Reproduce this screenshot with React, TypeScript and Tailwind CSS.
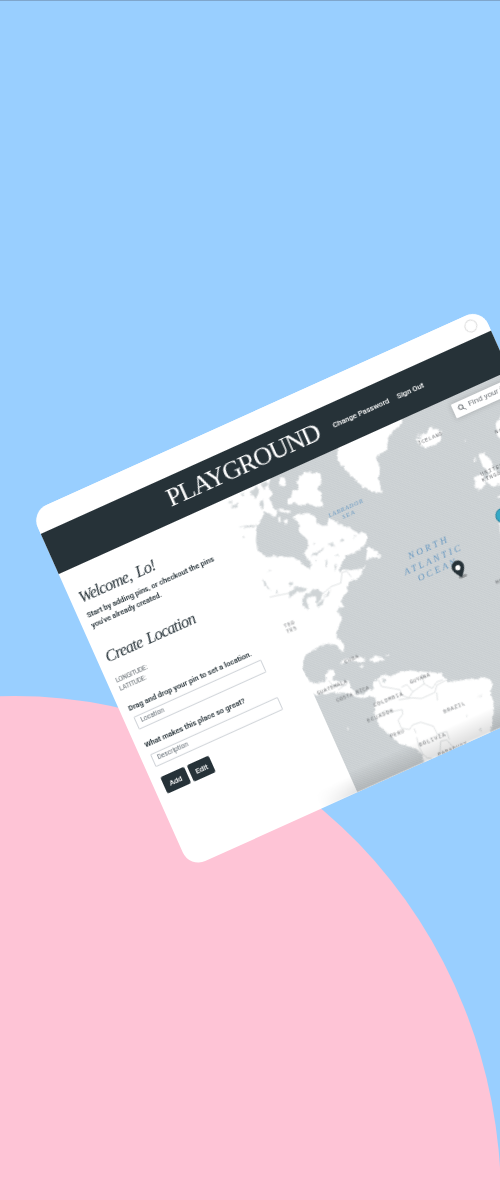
import React from "react";

type Label = { t: string; x: number; y: number; w: number };

const places: Label[] = [
  { t: "ICELAND", x: 418, y: 444.5, w: 26 },
  { t: "UNITED", x: 480.7, y: 475.5, w: 24 },
  { t: "KINGDOM", x: 482, y: 481.5, w: 28 },
  { t: "NORWAY", x: 495, y: 433.5, w: 24 },
  { t: "MOROCCO", x: 496, y: 584, w: 28 },
  { t: "TED", x: 284.3, y: 627.5, w: 11 },
  { t: "TES", x: 286.7, y: 633, w: 11 },
  { t: "CUBA", x: 345, y: 663, w: 15 },
  { t: "GUATEMALA", x: 317.7, y: 694.5, w: 32 },
  { t: "COSTA RICA", x: 337, y: 701.7, w: 35 },
  { t: "COLOMBIA", x: 374.3, y: 706.5, w: 31 },
  { t: "ECUADOR", x: 367.7, y: 722, w: 28 },
  { t: "GUYANA", x: 410.5, y: 683.5, w: 21 },
  { t: "PERU", x: 390.7, y: 737.5, w: 15 },
  { t: "BOLIVIA", x: 419.8, y: 746, w: 28 },
  { t: "BRAZIL", x: 444, y: 713, w: 23 },
  { t: "PARAGUAY", x: 438.8, y: 756, w: 31 },
];

const waters: (Label & { s: number })[] = [
  { t: "LABRADOR", x: 329, y: 517.5, w: 37, s: 6 },
  { t: "SEA", x: 342.5, y: 518.5, w: 13, s: 6 },
  { t: "NORTH", x: 409, y: 559, w: 42, s: 9.5 },
  { t: "ATLANTIC", x: 405, y: 575, w: 61, s: 9.5 },
  { t: "OCEAN", x: 419, y: 581, w: 41, s: 9.5 },
];

function WorldMap() {
  return (
    <svg className="block h-full w-full overflow-visible" viewBox="183.5 68.5 309.5 321.5" preserveAspectRatio="none">
      <defs>
        <pattern id="grain" width="3" height="3" patternUnits="userSpaceOnUse">
          <rect width="3" height="3" fill="#d0d5d7" />
          <path d="M0 0L3 3" stroke="#c6cbcf" strokeWidth=".8" />
        </pattern>
        <filter id="coast" filterUnits="userSpaceOnUse" x="180" y="300" width="400" height="560" colorInterpolationFilters="sRGB">
          <feTurbulence type="fractalNoise" baseFrequency=".25" numOctaves="3" seed="4" result="n" />
          <feDisplacementMap in="SourceGraphic" in2="n" scale="4" xChannelSelector="R" yChannelSelector="G" />
        </filter>
        <linearGradient id="foot" x1="0" y1="0" x2="0" y2="1">
          <stop offset="0" stopColor="#000" stopOpacity="0" />
          <stop offset="1" stopColor="#000" stopOpacity=".13" />
        </linearGradient>
      </defs>
      <rect x="183.5" y="60" width="320" height="340" fill="url(#grain)" />
      <g transform="matrix(.912 .4115 -.409 .9114 181.27 -478.24)">
        <g filter="url(#coast)" fill="#fff">
          <g transform="translate(220 500) scale(.33333)">
            <path d="M-300-300L95-300 150-70 143-40 155-25 148 0 160 20 170 35 165 50 150 45 130 30 125 50 115 68 108 95 106 120 110 150 125 162 145 170 165 166 190 170 215 170 235 180 250 195 268 205 272 190 258 170 250 160 262 140 262 120 250 108 235 95 235 70 217 48 230 40 262 38 280 45 292 68 305 76 320 75 325 50 345 65 385 82 410 96 438 100 438 125 425 142 400 157 375 167 358 200 358 217 372 207 383 208 400 208 425 204 437 196 425 215 410 240 400 235 390 245 378 257 382 275 368 287 362 302 370 320 358 322 358 345 366 355 350 385 347 405 370 430 373 450 362 452 345 432 325 430 300 435 275 450 255 465 246 490 250 515 270 543 295 550 315 540 320 515 340 507 343 525 335 540 360 545 385 540 395 568 405 580 430 583 445 568 457 570 465 592 450 588 430 594 405 588 380 577 340 575 280 583-300 583z" />
            <path d="M437 168L442 135 452 145 468 150 470 163 485 165 470 174 450 174 437 180z" />
            <path d="M250-85L300-80 302-50 290-38 305-20 300 0 308 20 280 18 262 8 240 18 225 8 200 14 198-2 213-12 215-30 237-30 228-52 232-68z" />
            <path d="M176-65l14-4 6 14-8 14-14-6z" />
            <path d="M190 60l8-6 4 12-6 6zM172 52l6-4 2 14-6 4zM168 25l24 4 20 2-10 8-20-4z" />
          </g>
          <g transform="translate(270 600) scale(.33333)">
            <path d="M308 285L308 255 320 235 345 222 360 228 385 216 410 208 440 212 480 215 510 218 530 242 570 240 600 235 650 232 668 245 662 275 672 320 668 370 640 440 560 520 480 540 455 460 440 445 390 430 350 395 325 370 315 350 312 320 318 300 300 280 292 272 300 268z" />
            <path d="M207 190L222 176 245 172 268 168 288 178 270 184 240 180 222 184zM298 180l18-16 20 6 8 8-22 6zM345 163l12-2-2 5zM268 199l14-4-6 8z" />
            <path d="M230 381l6 2-2 5z" />
          </g>
          <g transform="translate(320 400) scale(.33333)">
            <path d="M50 152L60 100 240 40 245 66 205 105 197 148 165 172 178 200 174 232 183 277 155 274 130 262 95 230 72 205 50 180z" />
            <path d="M283 100L300 107 318 97 325 82 345 85 364 98 360 120 340 136 312 142 295 132 283 118 300 112z" />
          </g>
          <g transform="translate(440 360) scale(.33333)">
            <path d="M112 283l18-8 4 14 18 12 10 28 34 20v20l-46 8-16-18 12-18-20-24zM103 350l20-10 12 18 2 14-24 18-10-10zM164 190l26-40v95l-20-18zM168 412l24-18v18zM178 485l14-6v45l-14-8z" />
            <path d="M98 298l7-4 2 8-6 2zM72 238l4 1-2 5zM126 246l4 1-2 4z" />
          </g>
        </g>
        <g filter="url(#coast)" fill="#cfd4d6">
          <g transform="translate(220 500) scale(.33333)">
            <path d="M204 293L212 268 232 256 262 266 248 274 228 276 214 288zM254 282l-10 16 8 20 8 12 4-10-6-20 10-14 18 4 4 20 10-12 8-20-16-12-18 4-10 8zM288 318l24-24-4 14-16 14zM308 292l18-20 6-2-8 16z" />
            <path d="M122 234l12 10 16 28-12-10zM165 278l8-10 2 10zM205 250l8-6 6 8-8 4zM52 80l36-6 30 2-30 5zM66 105l8 6-6 2zM270 168l20-14 22-14-6 10-22 16zM320 132l12-6 14 16-14-8zM355 124l14-10 2 8zM398 116l6-12 4 2zM344 164l8-4v10zM315 198l2-20 4 4-2 18zM340 210l6-20 3 4-4 18zM284 178l6 2-4 6zM276 128l8-2v5zM142 214l6-8 2 4zM348 334l5-6 4 12z" />
            <path d="M30 18l20-8 2 10-16 4zM20 6l16-6-2 10zM60-18l12-6-2 12zM90-25l22-20 4 14-8 26-12-8zM120-50l20-8 4 10-18 14zM86-50l10-10 6 8zM48-38l14-2-4 8zM116 10l10-15 4 20-6 14z" />
          </g>
          <g transform="translate(270 600) scale(.33333)">
            <path d="M96 0l14 4 4 24-12-10zM138 12l20-14-8 16zM338 232l8 6-2 10-6-6zM590 342l3 4-4 1zM630 385l5-2-2 10zM622 290l22-12-14 6zM200 28l8-10 8 18-6 4z" />
          </g>
        </g>
        <g fill="none" stroke="#cdd1d3" strokeWidth="2" strokeLinejoin="round">
          <g transform="translate(270 600) scale(.33333)">
            <path d="M324 236l10 22 36 6 20 4 4 16M394 284l22 8 12-18-18-22-16 8M428 274l34-24-8-30M462 250l24 14 14-20 18-6M386 298l40-6 28 2 40-18 6-22 26-14M500 276l2 24M320 345l24-14 22 2M366 333l30-6 2 14-14 18 10 24 24 4M418 387l10-14 24-8 38 12 12 24M438 398l-6-14M440 410l6 26 12 24 14 12M472 472l24 4 14-20 2-34 18-4 18 20 4 20-14 10M502 401l28-8 8 24M175 240l14 16 40-2M204 268l28-20" />
          </g>
          <g transform="translate(220 500) scale(.33333)">
            <path d="M148 290l58-12M295 290l38-32 28-10 4-32 14-4 14 18" />
          </g>
        </g>
        <g className="font-['Liberation_Mono',monospace]" fontSize="5.4" fill="#66696c">
          {places.map((p) => (
            <text key={p.t} textLength={p.w} lengthAdjust="spacing" transform={`translate(${p.x} ${p.y}) rotate(-22.5)`}>
              {p.t}
            </text>
          ))}
        </g>
        <g className="font-['Liberation_Serif',serif] italic" fill="#6798c1">
          {waters.map((p) => (
            <text key={p.t} fontSize={p.s} textLength={p.w} lengthAdjust="spacing" transform={`translate(${p.x} ${p.y}) rotate(-24.3)`}>
              {p.t}
            </text>
          ))}
        </g>
        <circle cx="502.5" cy="515" r="7.2" fill="#35a9c6" stroke="#237f9b" strokeWidth="1" />
        <ellipse cx="462.5" cy="576" rx="4.5" ry="1.6" fill="#000" opacity=".28" transform="rotate(-20 462 576)" />
        <path
          d="M461.7 577C457.2 574.5 451.4 571.2 451.2 567.2A6.3 6.3 0 1 1 463.7 567C463.9 570.5 462.2 573.5 461.7 577Z"
          fill="#263238"
        />
        <circle cx="457.4" cy="567.3" r="2.6" fill="#fff" />
      </g>
      <rect x="183.5" y="368" width="311" height="22" fill="url(#foot)" />
    </svg>
  );
}

function Field({ hint, className }: { hint: string; className: string }) {
  return (
    <div className={`ml-px flex w-[140.4px] items-center rounded-[1px] border border-[#cfd3d8] pl-[4.5px] text-[6.6px] text-[#626b73] ${className}`}>
      {hint}
    </div>
  );
}

function Sidebar() {
  return (
    <section className="relative z-10 flex w-[183.5px] shrink-0 flex-col whitespace-nowrap pl-[9px] pt-[21px] text-[#263238]">
      <h2 className="h-5 font-['Liberation_Serif',serif] text-[16.5px] italic leading-5 tracking-[-0.85px] [word-spacing:2.5px]">Welcome, Lo!</h2>
      <p className="mt-[3.7px] text-[7.5px] font-semibold leading-[10.5px] tracking-[-0.01px]">
        Start by adding pins, or checkout the pins
        <br />
        you've already created.
      </p>
      <h2 className="mt-[20.2px] h-5 font-['Liberation_Serif',serif] text-[16.5px] italic leading-5 tracking-[-0.8px] [word-spacing:2px]">Create Location</h2>
      <p className="mt-[10.8px] text-[6.3px] leading-[8.5px] tracking-[-0.1px] text-[#60686d]">
        LONGITUDE:
        <br />
        LATITUDE:
      </p>
      <p className="mt-[13.1px] h-[10px] text-[7.5px] font-semibold leading-[10px] tracking-[0.02px]">Drag and drop your pin to set a location.</p>
      <Field hint="Location" className="mt-[3.7px] h-[14.3px]" />
      <p className="mt-[11.6px] h-[10px] text-[7.5px] font-semibold leading-[10px] tracking-[0.02px]">What makes this place so great?</p>
      <Field hint="Description" className="mt-[5.4px] h-[14px]" />
      <div className="ml-[0.7px] mt-[11px] flex gap-[3.2px] text-[7.6px] font-medium text-white">
        <button className="h-[18.2px] w-[26.2px] rounded-[2px] bg-[#263238]">Add</button>
        <button className="h-[18.2px] w-[24.4px] rounded-[2px] bg-[#263238]">Edit</button>
      </div>
    </section>
  );
}

export default function App() {
  return (
    <main className="relative h-[1200px] w-[500px] overflow-hidden border-t border-[#7fa6cc] bg-[#99cfff] font-['Roboto',sans-serif]">
      <div className="absolute left-[-471px] top-[694.7px] h-[1008px] w-[972px] rounded-[50%] bg-[#fec4d6]" />
      <article className="absolute left-[31px] top-[511px] flex h-[390px] w-[493.5px] origin-top-left flex-col overflow-hidden rounded-[17px] bg-white [transform:matrix(0.9114,-0.4115,0.407,0.913,0,0)]">
        <div className="relative z-10 flex h-[23.6px] shrink-0 items-center justify-end bg-white pr-[9.5px]">
          <span className="h-[13px] w-[13px] rounded-full border border-[#d8d8d8]" />
        </div>
        <header className="relative z-10 flex h-[44.9px] shrink-0 items-baseline whitespace-nowrap bg-[#263238] pl-[130px] pt-[3.5px] text-white">
          <h1 className="w-[181px] font-['Liberation_Serif',serif] text-[26px] leading-[36px] tracking-[-1.1px]">PLAYGROUND</h1>
          <nav className="relative bottom-[5.5px] flex gap-[9px] text-[7.6px] font-medium">
            <a>Change Password</a>
            <a>Sign Out</a>
          </nav>
        </header>
        <div className="flex min-h-0 flex-1">
          <Sidebar />
          <section className="relative min-w-0 flex-1">
            <WorldMap />
            <div className="absolute bottom-0 left-[-40px] h-[18px] w-[40px] bg-linear-to-t from-black/12 to-transparent [mask-image:linear-gradient(to_right,transparent,black)]" />
            <div className="absolute left-[243.9px] top-[6.5px] flex h-[15px] w-[80px] items-center gap-[3px] rounded-[1px] bg-white pl-[5px] text-[8px] text-[#70757a] shadow-[0_0_5px_1px_rgba(0,0,0,0.13)]">
              <svg className="h-[8px] w-[8px]" viewBox="0 0 8 8" fill="none" stroke="#5b6166" strokeWidth="1">
                <circle cx="3.2" cy="3.2" r="2.3" />
                <path d="M5 5L7.5 7.5" />
              </svg>
              <span className="whitespace-nowrap">Find your favorite</span>
            </div>
          </section>
        </div>
      </article>
    </main>
  );
}
